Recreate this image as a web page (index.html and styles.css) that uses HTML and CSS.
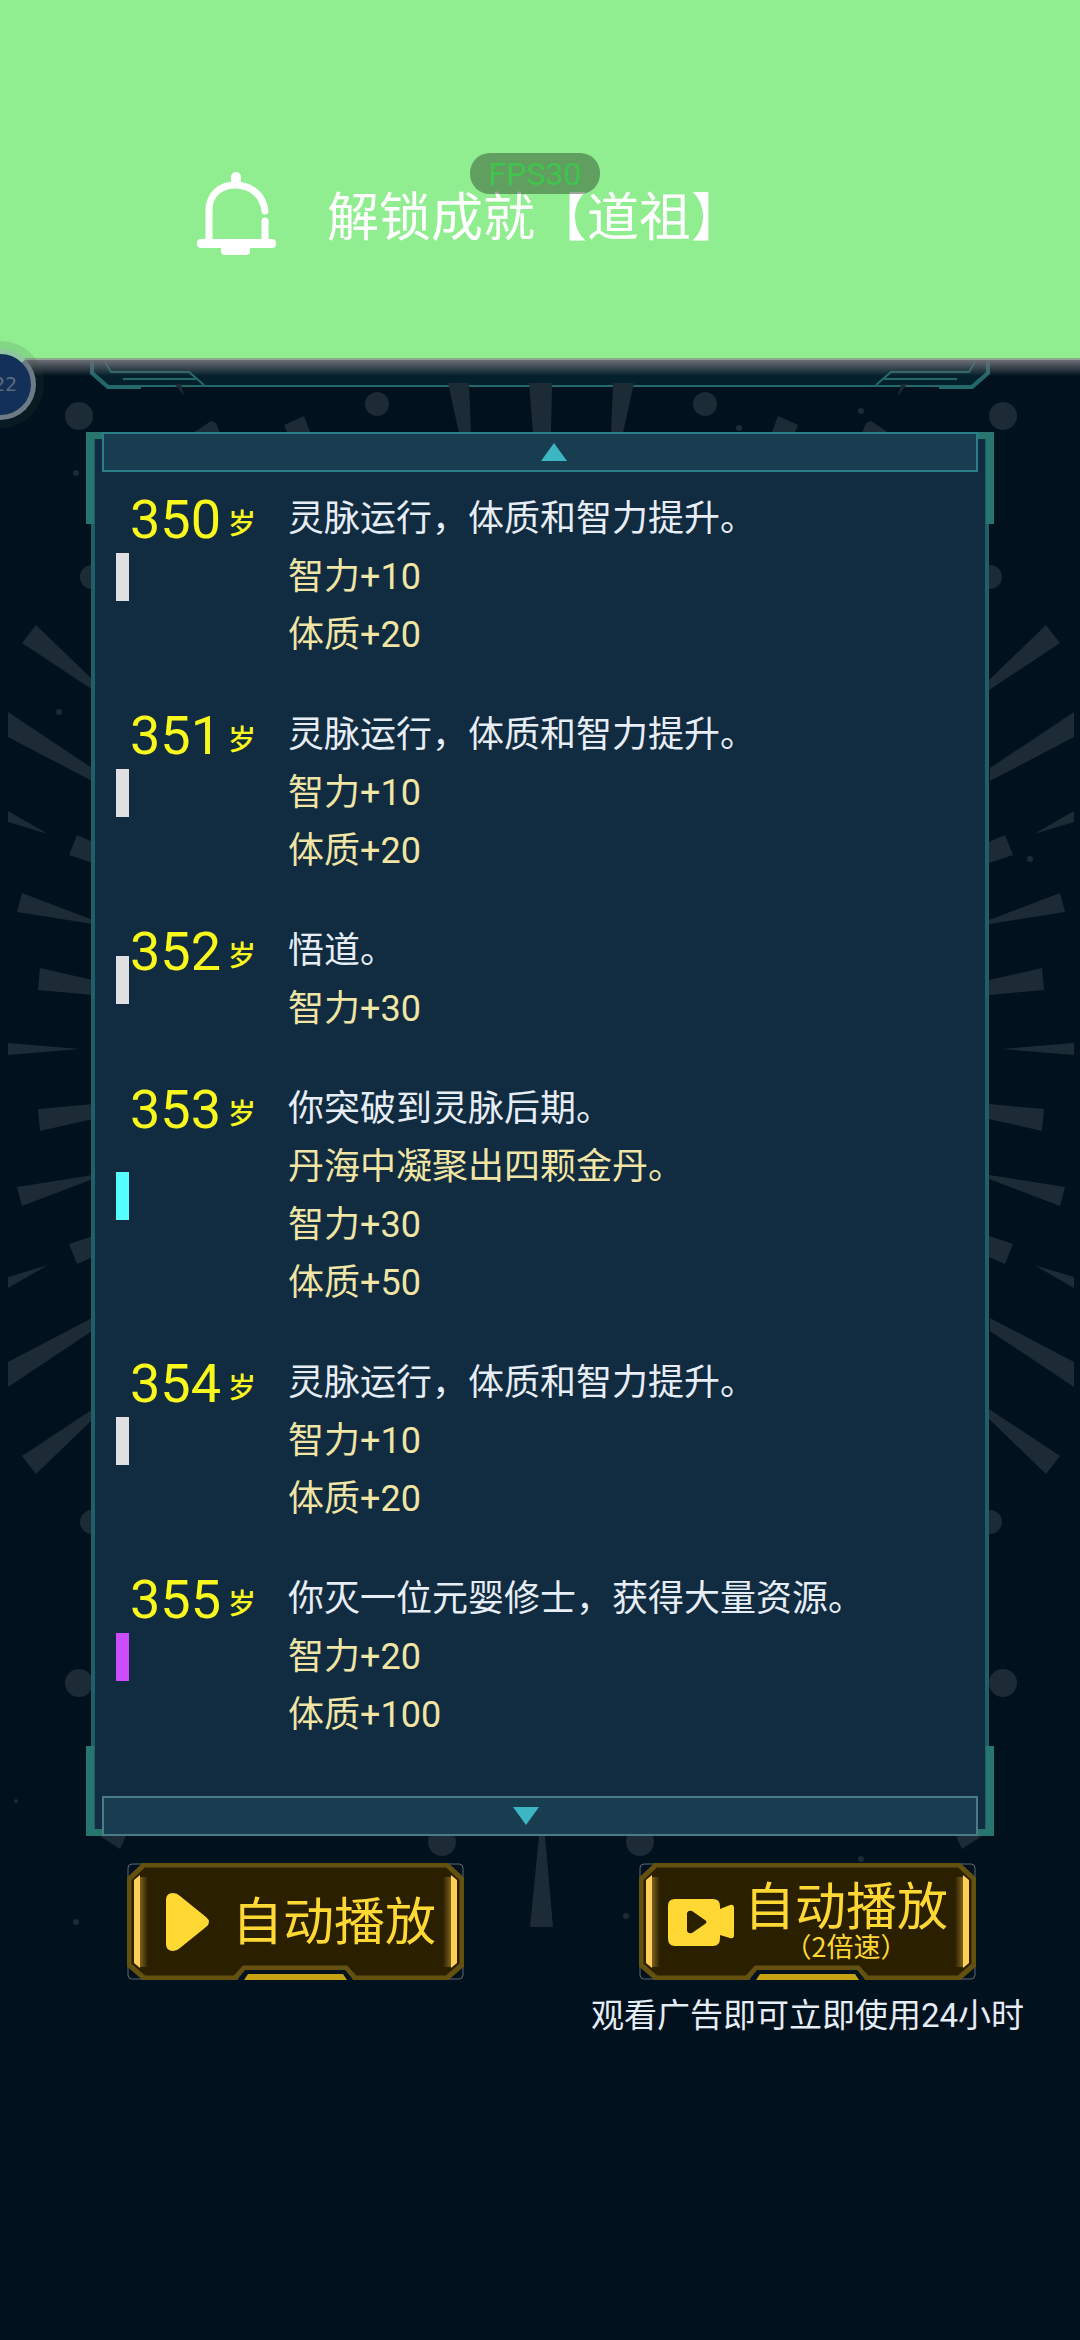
FILE: index.html
```
<!DOCTYPE html>
<html lang="zh-CN">
<head>
    <meta charset="UTF-8">
    <meta name="viewport" content="width=device-width, initial-scale=1.0">
    <title>修仙人生</title>
    <link rel="stylesheet" href="styles.css">
</head>
<body>
    <svg class="backdrop" viewBox="0 0 1080 2340" aria-hidden="true">
        <defs>
            <g id="rays">
                <path d="M22 643L36 625L93 680V690Z"/>
                <path d="M8 712V737L92 781V768Z"/>
                <path d="M8 811V822L48 834Z"/>
                <path d="M69 855L77 835L93 842V863Z"/>
                <path d="M17 912L22 893L93 920V924Z"/>
                <path d="M38 990L40 968L93 980V995Z"/>
                <circle cx="79" cy="416" r="14"/>
                <circle cx="92" cy="577" r="12"/>
            </g>
            <g id="side">
                <use href="#rays"/>
                <use href="#rays" transform="translate(0 2099) scale(1 -1)"/>
                <path d="M8 1043V1055L80 1049Z"/>
                <path d="M448 383H469L471 433H459Z"/>
                <path d="M193 433L211 421L216 423L220 433Z"/>
                <path d="M284 425L304 416L310 432H287Z"/>
                <path d="M100 1836L120 1849L126 1836Z"/>
                <path d="M175 384L181 384L184 396Z"/>
                <circle cx="377" cy="404" r="12"/>
                <circle cx="442" cy="1842" r="14"/>
            </g>
            <g id="hud-corner">
                <path d="M92 356V373L108 387H141" stroke-width="4"/>
                <path d="M105 356V362L111 372H189L204 385M123 379H196" stroke-width="2"/>
            </g>
        </defs>
        <path class="hud-fill" d="M92 356V373L106 385H974L988 373V356Z"/>
        <g class="hud-line">
            <path d="M108 386H972" stroke-width="2"/>
            <use href="#hud-corner"/>
            <use href="#hud-corner" transform="translate(1080 0) scale(-1 1)"/>
        </g>
        <g class="shapes">
            <use href="#side"/>
            <use href="#side" transform="translate(1082 0) scale(-1 1)"/>
            <path d="M529 383H552L551 433H533Z"/>
            <path d="M539 1836H545L553 1927H530Z"/>
            <circle cx="76" cy="473" r="3"/>
            <circle cx="739" cy="428" r="3"/>
            <circle cx="861" cy="411" r="3"/>
            <circle cx="59" cy="712" r="3"/>
            <circle cx="1030" cy="859" r="3"/>
            <circle cx="16" cy="1801" r="2"/>
            <circle cx="76" cy="1922" r="3"/>
            <circle cx="626" cy="1916" r="3"/>
            <circle cx="861" cy="1859" r="3"/>
        </g>
    </svg>

    <header class="toast">
        <svg class="bell" viewBox="0 0 80 84" aria-hidden="true">
            <g fill="none" stroke="#fff" stroke-width="7" stroke-linecap="round">
                <path d="M12 72V39C12 23 24 14 38 14C54 14 66 24 68 40"/>
                <path d="M68 50V70"/>
            </g>
            <rect x="34" y="1" width="10" height="14" rx="5" fill="#fff"/>
            <rect x="0" y="68" width="79" height="9" rx="4" fill="#fff"/>
            <path d="M24 75H53V80Q53 84 49 84H28Q24 84 24 80Z" fill="#fff"/>
        </svg>
        <p class="toast-text">解锁成就【道祖】</p>
    </header>
    <div class="fps">FPS30</div>
    <div class="bubble">22</div>

    <main>
        <section class="panel">
            <button class="scroll scroll-up" aria-label="向上"><svg viewBox="0 0 26 18"><path d="M13 0L26 18H0Z"/></svg></button>
            <ol class="log">
                <li class="entry">
                    <span class="mark"></span>
                    <div class="age">350<small>岁</small></div>
                    <div class="event"><p>灵脉运行，体质和智力提升。</p><p class="gain">智力+10</p><p class="gain">体质+20</p></div>
                </li>
                <li class="entry">
                    <span class="mark"></span>
                    <div class="age">351<small>岁</small></div>
                    <div class="event"><p>灵脉运行，体质和智力提升。</p><p class="gain">智力+10</p><p class="gain">体质+20</p></div>
                </li>
                <li class="entry">
                    <span class="mark"></span>
                    <div class="age">352<small>岁</small></div>
                    <div class="event"><p>悟道。</p><p class="gain">智力+30</p></div>
                </li>
                <li class="entry">
                    <span class="mark mark-rare"></span>
                    <div class="age">353<small>岁</small></div>
                    <div class="event"><p>你突破到灵脉后期。</p><p class="gain">丹海中凝聚出四颗金丹。</p><p class="gain">智力+30</p><p class="gain">体质+50</p></div>
                </li>
                <li class="entry">
                    <span class="mark"></span>
                    <div class="age">354<small>岁</small></div>
                    <div class="event"><p>灵脉运行，体质和智力提升。</p><p class="gain">智力+10</p><p class="gain">体质+20</p></div>
                </li>
                <li class="entry">
                    <span class="mark mark-epic"></span>
                    <div class="age">355<small>岁</small></div>
                    <div class="event"><p>你灭一位元婴修士，获得大量资源。</p><p class="gain">智力+20</p><p class="gain">体质+100</p></div>
                </li>
            </ol>
            <button class="scroll scroll-down" aria-label="向下"><svg viewBox="0 0 26 18"><path d="M0 0H26L13 18Z"/></svg></button>
        </section>

        <section class="actions">
            <button class="play">
                <svg class="play-frame" viewBox="0 0 337 117" aria-hidden="true">
                    <defs>
                        <linearGradient id="glow"><stop offset="0" stop-color="#7d6120"/><stop offset="1" stop-color="#2a2000"/></linearGradient>
                        <g id="frame">
                            <rect x="1" y="1" width="335" height="115" rx="4" fill="none" stroke="#5d6873"/>
                            <path d="M17 2H320L335 16V102L320 115H228L219 105H117L108 115H17L2 102V16Z" fill="#2a2000" stroke="#65510f" stroke-width="5"/>
                            <g id="lamp">
                                <rect x="13" y="14" width="8" height="90" fill="url(#glow)"/>
                                <path d="M7 17L13 12V105L7 100Z" fill="#ffce59"/>
                            </g>
                            <use href="#lamp" transform="translate(337 0) scale(-1 1)"/>
                            <path d="M111 117L118 107H218L226 117Z" fill="#02131f"/>
                            <path d="M117 117L121 111H216L220 117Z" fill="#c7a315"/>
                        </g>
                    </defs>
                    <use href="#frame"/>
                </svg>
                <svg class="icon" viewBox="0 0 66 60" aria-hidden="true"><path d="M10 8Q10 1 17 1Q21 1 24 4L50 25Q56 30 50 35L24 56Q21 59 17 59Q10 59 10 52Z"/></svg>
                <span class="label">自动播放</span>
            </button>
            <div class="ad">
                <button class="play" aria-describedby="ad-note">
                    <svg class="play-frame" viewBox="0 0 337 117" aria-hidden="true"><use href="#frame"/></svg>
                    <svg class="icon" viewBox="0 0 66 60" aria-hidden="true">
                        <path fill-rule="evenodd" d="M7 7H45Q52 7 52 14V17L62 13Q66 12 66 16V43Q66 47 62 46L52 43V46Q52 54 45 54H7Q0 54 0 46V14Q0 7 7 7ZM19 21V39Q20 42 24 41L37 32Q40 30 37 28L24 19Q20 18 19 21Z"/>
                    </svg>
                    <span class="label">自动播放<small>（2倍速）</small></span>
                </button>
                <p class="ad-note" id="ad-note">观看广告即可立即使用24小时</p>
            </div>
        </section>
    </main>
</body>
</html>
```
FILE: styles.css
```
* {
    margin: 0;
    padding: 0;
    box-sizing: border-box;
}

body {
    position: relative;
    min-height: 100vh;
    overflow-x: hidden;
    background-color: #01121e;
    color: #e6edf5;
    font-family: Roboto, "Noto Sans CJK SC", sans-serif;
}

button {
    border: none;
    background: none;
    font: inherit;
    cursor: pointer;
}

.backdrop {
    position: absolute;
    top: 0;
    left: 0;
    width: 100%;
    z-index: -1;
}

.shapes {
    fill: #1c2b35;
}

.hud-fill {
    fill: #04202b;
}

.hud-line {
    fill: none;
    stroke: #23686a;
}

/* achievement toast */
.toast {
    position: relative;
    display: flex;
    align-items: center;
    gap: 50px;
    padding: 171px 197px 103px;
    background-color: #90ee90;
    border-bottom: 2px solid #8fa890;
}

.toast::after {
    content: "";
    position: absolute;
    top: 100%;
    left: 0;
    width: 100%;
    height: 16px;
    margin-top: 2px;
    background: linear-gradient(#6b6d74, rgba(60, 70, 80, 0));
}

.bell {
    width: 80px;
    height: 84px;
}

.toast-text {
    padding-top: 12px;
    color: #fff;
    font-size: 52px;
    line-height: 72px;
    white-space: nowrap;
}

.fps {
    position: absolute;
    top: 153px;
    left: 50%;
    width: 130px;
    margin-left: -70px;
    border-radius: 20px;
    background-color: rgba(50, 80, 50, .5);
    color: #3fc44e;
    font-size: 32px;
    line-height: 43px;
    height: 41px;
    text-align: center;
}

.bubble {
    position: absolute;
    top: 349px;
    left: -35px;
    width: 71px;
    height: 71px;
    border: 5px solid #6d7b87;
    border-top-color: #8fc5a0;
    border-radius: 50%;
    background-color: #123058;
    box-shadow: 0 0 0 8px rgba(60, 80, 60, .15);
    color: #5a6a7e;
    font-family: "DejaVu Sans Mono", monospace;
    font-size: 20px;
    line-height: 61px;
    text-align: right;
    padding-right: 14px;
}

/* life log, bracket corners are drawn with backgrounds */
.panel {
    margin: 72px 86px 0;
    background:
        linear-gradient(#27756f, #27756f) left top / 8px 92px,
        linear-gradient(#27756f, #27756f) right top / 8px 92px,
        linear-gradient(#27756f, #27756f) left bottom / 8px 90px,
        linear-gradient(#27756f, #27756f) right bottom / 8px 90px,
        linear-gradient(#27756f, #27756f) left top / 100% 7px,
        linear-gradient(#27756f, #27756f) left bottom / 100% 7px,
        linear-gradient(#205f65, #205f65) 5px 0 / 4px 100%,
        linear-gradient(#205f65, #205f65) right 5px top / 4px 100%,
        linear-gradient(#112b40, #112b40) center / calc(100% - 12px) 100%;
    background-repeat: no-repeat;
}

.scroll {
    display: block;
    width: calc(100% - 32px);
    height: 40px;
    margin: 0 16px;
    border: 2px solid #2c7f88;
    background-color: #193d50;
    line-height: 0;
}

.scroll svg {
    width: 26px;
    height: 18px;
    fill: #3cb6c2;
}

.scroll-up {
    padding-left: 28px;
}

.scroll-down {
    padding-right: 28px;
    border-color: #4b7b86;
}

.log {
    display: grid;
    gap: 42px;
    padding: 18px 30px 52px;
    list-style: none;
}

.entry {
    display: grid;
    grid-template-columns: 13px 127px 1fr;
    align-items: start;
}

.mark {
    align-self: center;
    height: 48px;
    background-color: #e0e0e2;
}

.mark-rare {
    background-color: #55ffff;
}

.mark-epic {
    background-color: #cc4dff;
}

.age {
    display: flex;
    align-items: center;
    justify-content: flex-end;
    gap: 7px;
    color: #f8f81c;
    font-size: 54px;
    line-height: 60px;
    white-space: nowrap;
}

.age small {
    padding-top: 10px;
    font-size: 28px;
    font-weight: 500;
    line-height: 40px;
}

.event {
    padding-left: 32px;
    font-size: 36px;
    line-height: 58px;
}

.gain {
    color: #f0e5a4;
}

/* autoplay buttons */
.actions {
    display: flex;
    align-items: flex-start;
    justify-content: space-between;
    margin-top: 27px;
    padding: 0 56px 0 127px;
}

.play {
    position: relative;
    display: flex;
    align-items: center;
    gap: 10px;
    width: 337px;
    height: 117px;
    padding-left: 29px;
    color: #ffd834;
    font-family: "Noto Sans CJK SC", sans-serif;
}

.play-frame {
    position: absolute;
    inset: 0;
    width: 100%;
    height: 100%;
}

.icon {
    position: relative;
    width: 66px;
    height: 60px;
    fill: #ffd834;
}

.label {
    position: relative;
    padding-bottom: 8px;
    font-size: 51px;
    line-height: 56px;
    white-space: nowrap;
}

.label small {
    display: block;
    font-size: 27px;
    line-height: 30px;
}

.ad {
    display: flex;
    flex-direction: column;
    align-items: center;
    gap: 16px;
}

.ad-note {
    font-size: 33px;
    line-height: 40px;
}
```
